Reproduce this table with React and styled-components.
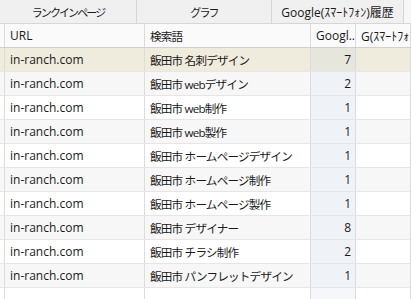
import React from "react";
import styled, { createGlobalStyle } from "styled-components";

const Global = createGlobalStyle`
  html, body { margin: 0; padding: 0; background: #fff; }
  body { font-family: "Open Sans", "Noto Sans CJK JP", sans-serif; font-size: 12px; color: #1a1a1a; }
`;

const Wrap = styled.div`
  width: 411px;
  height: 299px;
  overflow: hidden;
  background: #fff;
`;

const TabBar = styled.div`
  display: grid;
  grid-template-columns: 137px 135px 132px 1fr;
  height: 23px;
  background: #f0f0f0;
  border-bottom: 1px solid #d6d6d6;
`;

const Tab = styled.div`
  display: flex;
  align-items: center;
  justify-content: center;
  border-right: ${(p) => (p.$last ? "none" : "1px solid #d6d6d6")};
  white-space: nowrap;
  overflow: hidden;
  font-size: ${(p) => (p.$tight ? "11px" : "12px")};
  letter-spacing: ${(p) => (p.$tight ? "-1.9px" : "0")};
  background: ${(p) => (p.$empty ? "#f7f7f7" : "transparent")};
`;

const cols = "5px 140px 166px 45px 1fr";

const Row = styled.div`
  display: grid;
  grid-template-columns: ${cols};
  height: 24px;
  background: ${(p) => p.$bg};
  border-bottom: 1px solid ${(p) => p.$line || "#e6e6e6"};
  box-sizing: border-box;
`;

const Cell = styled.div`
  display: flex;
  align-items: center;
  justify-content: ${(p) => (p.$num ? "flex-end" : "flex-start")};
  padding: 0 4px 0 ${(p) => (p.$num ? "0" : "5px")};
  border-right: 1px solid #dcdcdc;
  white-space: nowrap;
  overflow: hidden;
  font-size: ${(p) => (p.$jp ? "11.6px" : "12px")};
  letter-spacing: ${(p) => (p.$jp ? "-0.8px" : "0")};
  background: ${(p) => p.$bg || "transparent"};
`;

const Stub = styled.div`
  border-right: 1px solid #dcdcdc;
`;

const rows = [
  ["飯田市 名刺デザイン", 7],
  ["飯田市 webデザイン", 2],
  ["飯田市 web制作", 1],
  ["飯田市 web製作", 1],
  ["飯田市 ホームページデザイン", 1],
  ["飯田市 ホームページ制作", 1],
  ["飯田市 ホームページ製作", 1],
  ["飯田市 デザイナー", 8],
  ["飯田市 チラシ制作", 2],
  ["飯田市 パンフレットデザイン", 1],
];

export default function App() {
  return (
    <Wrap>
      <Global />
      <TabBar>
        <Tab $tight>ランクインページ</Tab>
        <Tab $tight>グラフ</Tab>
        <Tab>Google(ｽﾏｰﾄﾌｫﾝ)履歴</Tab>
        <Tab $last $empty />
      </TabBar>
      <Row $bg="#fafafa" $line="#d0d0d0">
        <Stub />
        <Cell>URL</Cell>
        <Cell $jp>検索語</Cell>
        <Cell>Googl..</Cell>
        <Cell>G(ｽﾏｰﾄﾌｫﾝ)</Cell>
      </Row>
      {rows.map(([kw, n], i) => {
        const sel = i === 0;
        const bg = sel ? "#efebdd" : i % 2 === 1 ? "#f7f7f7" : "#ffffff";
        const numBg = sel ? "#e6e6dc" : "#eff3f8";
        return (
          <Row key={i} $bg={bg}>
            <Stub />
            <Cell>in-ranch.com</Cell>
            <Cell $jp>{kw}</Cell>
            <Cell $num $bg={numBg}>{n}</Cell>
            <Cell />
          </Row>
        );
      })}
      <Row $bg="#fff">
        <Stub />
        <Cell />
        <Cell />
        <Cell $bg="#f5f7fa" />
        <Cell />
      </Row>
    </Wrap>
  );
}
